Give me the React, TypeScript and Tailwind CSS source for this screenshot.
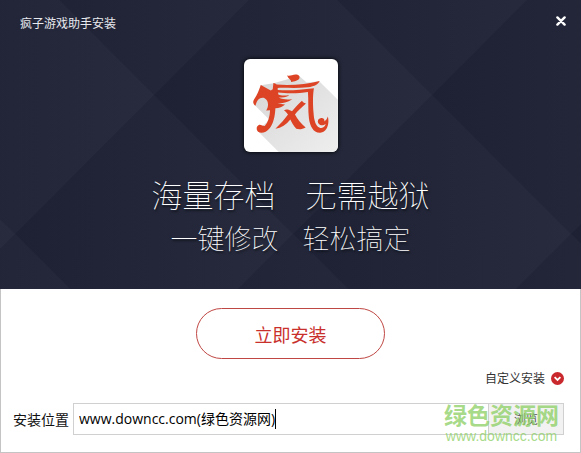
import React from 'react';

// Diamonds of the header background, 278px from tip to tip
const columns = [-1, 0, 1, 2, 3, 4, 5, 6, 7];

const HeaderPattern = () => (
  <svg className="absolute inset-0 h-full w-full" aria-hidden="true">
    <defs>
      <linearGradient id="facet" x1="0" y1="0" x2="1" y2="0">
        <stop offset="0" stopColor="#1d2133" />
        <stop offset="1" stopColor="#272b3d" />
      </linearGradient>
      <path id="diamond" d="M0 139L139 0L278 139L139 278Z" fill="url(#facet)" />
    </defs>
    {columns.map((column) => (
      <g key={column}>
        <use href="#diamond" x={278 * column + 15} y={-183} />
        <use href="#diamond" x={278 * column - 124} y={-44} />
        <use href="#diamond" x={278 * column + 15} y={95} />
        <use href="#diamond" x={278 * column - 124} y={234} />
      </g>
    ))}
  </svg>
);

const Logo = () => (
  <svg viewBox="24 27 282 280" className="h-full w-full" role="img" aria-label="疯子游戏助手">
    <defs>
      <linearGradient id="shade" x1="0" y1="0" x2="1" y2="1">
        <stop offset="0" stopColor="#d6d6d6" />
        <stop offset="1" stopColor="#eeeeee" />
      </linearGradient>
    </defs>
    <path d="M54 164L100 210L64 243L128 307H306V150L250 94L212 98L190 78L112 100L74 106Z" fill="url(#shade)" />
    <g fill="#dd4425">
      <path d="M153 76C160 81 168 74 179 74C188 74 193 79 190 86C187 92 176 95 165 96C167 90 157 88 153 76Z" />
      <path d="M112 99C116 99 119 102 122 104C166 108 211 103 251 93C249 102 236 109 216 112C183 116 149 113 125 114L125 120C158 123 191 120 234 115C230 139 231 170 233 190C234 209 239 228 250 233C260 238 269 230 269 222C264 227 255 229 249 223C242 215 247 206 256 205C263 204 267 209 265 215C270 212 274 207 276 200C281 220 275 247 253 249C232 250 222 228 219 206C216 180 218 150 216 126C190 131 154 131 126 128L127 134C137 139 151 136 160 136C152 142 138 143 128 143C142 150 155 149 169 148C155 158 140 160 124 161L147 164C140 171 129 175 118 175C117 198 112 223 100 236C91 248 75 252 66 246C60 240 60 230 68 226C73 223 79 229 86 229C96 218 101 201 102 181L90 182C97 173 98 159 91 150C84 140 72 143 66 150C61 156 60 162 58 168C51 163 49 156 54 148C63 136 69 119 74 105L104 122L110 118Z" />
      <path d="M198 153C201 158 204 160 210 161C195 175 184 184 177 194C183 207 196 222 209 233C199 239 189 239 181 237C173 228 166 216 163 209C151 224 136 234 118 237C133 222 147 207 156 194C151 187 147 183 144 181C151 178 158 179 168 184C179 172 188 162 198 153Z" />
    </g>
  </svg>
);

const CloseIcon = () => (
  <svg viewBox="0 0 10 10" className="h-[10px] w-[10px]" fill="none" stroke="#fff" strokeWidth="2.4" strokeLinecap="round">
    <path d="M1.4 1.4L8.6 8.6M8.6 1.4L1.4 8.6" />
  </svg>
);

const ChevronBadge = () => (
  <svg viewBox="0 0 13 13" className="h-[13px] w-[13px]">
    <circle cx="6.5" cy="6.5" r="6.5" fill="#c9282d" />
    <path d="M3.6 5.2L6.5 8L9.4 5.2" fill="none" stroke="#fff" strokeWidth="1.8" />
  </svg>
);

const Header = () => (
  <header className="relative h-[289px] overflow-hidden bg-[#22263a] text-white">
    <HeaderPattern />
    <div className="relative flex flex-col items-center">
      <div className="flex w-full items-center justify-between pt-[13px] pr-[15px] pl-5">
        <span className="text-xs leading-5 text-[#e8e9ee]">疯子游戏助手安装</span>
        <button type="button" aria-label="关闭" className="-mt-1">
          <CloseIcon />
        </button>
      </div>
      <div className="mt-[26px] h-[93px] w-[94px] overflow-hidden rounded-md bg-white shadow-[0_0_4px_#000]">
        <Logo />
      </div>
      <h1 className="mt-5 flex gap-[30px] text-[31px] leading-[44px] font-thin [text-shadow:1px_2px_2px_#0008]">
        <span>海量存档</span>
        <span>无需越狱</span>
      </h1>
      <p className="flex gap-6 text-[27px] leading-[44px] font-thin [text-shadow:1px_2px_2px_#0008]">
        <span>一键修改</span>
        <span>轻松搞定</span>
      </p>
    </div>
  </header>
);

const Watermark = () => (
  <div className="pointer-events-none absolute -top-1 right-1 flex flex-col items-center text-[#8fd068]/80">
    <span className="text-[23px] leading-7 font-bold">绿色资源网</span>
    <span className="font-['Liberation_Sans',sans-serif] text-sm leading-4">www.downcc.com</span>
  </div>
);

const PathField = () => (
  <div className="flex items-center pr-4 pl-3">
    <label htmlFor="path" className="text-sm text-[#111]">安装位置</label>
    <div className="relative ml-1 flex h-8 flex-1 border border-[#d0d0d0]">
      <div className="flex flex-1 items-center pl-[5px]">
        <input
          id="path"
          type="text"
          defaultValue="www.downcc.com(绿色资源网)"
          className="field-sizing-content bg-transparent font-['Open_Sans','Noto_Sans_CJK_SC',sans-serif] text-sm text-black outline-none"
        />
        <span className="h-5 w-px bg-black" />
      </div>
      <button type="button" className="w-[75px] border-l border-[#d0d0d0] bg-[#f2f2f2] text-xs text-[#555]">
        浏览
      </button>
      <Watermark />
    </div>
  </div>
);

const App = () => {
  return (
    <div className="flex min-h-screen flex-col bg-white font-['Noto_Sans_CJK_SC',sans-serif]">
      <Header />
      <main className="flex flex-1 flex-col border-x border-b border-[#c4c4c4] pt-[19px]">
        <button
          type="button"
          className="h-[51px] w-[189px] self-center rounded-full border border-[#bf4743] text-lg text-[#c9302c]"
        >
          立即安装
        </button>
        <button type="button" className="mt-[9px] mr-4 flex items-center gap-[6px] self-end text-xs leading-5 text-[#333]">
          自定义安装
          <ChevronBadge />
        </button>
        <div className="mt-[15px]">
          <PathField />
        </div>
      </main>
    </div>
  );
};

export default App;
